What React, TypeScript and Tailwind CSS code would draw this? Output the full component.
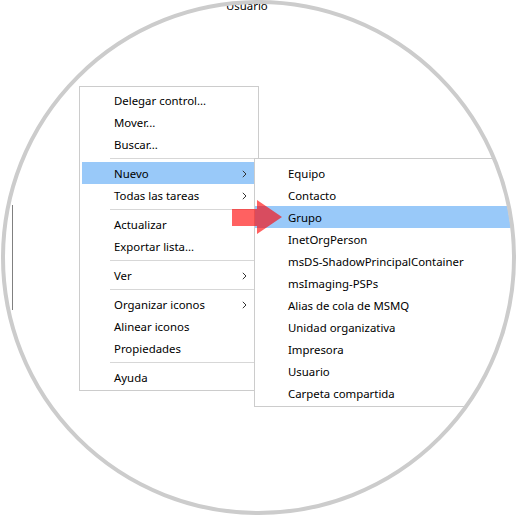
import React from "react";

type Item = { label: string; sub?: boolean; active?: boolean } | "sep";

const mainItems: Item[] = [
  { label: "Delegar control..." },
  { label: "Mover..." },
  { label: "Buscar..." },
  "sep",
  { label: "Nuevo", sub: true, active: true },
  { label: "Todas las tareas", sub: true },
  "sep",
  { label: "Actualizar" },
  { label: "Exportar lista..." },
  "sep",
  { label: "Ver", sub: true },
  "sep",
  { label: "Organizar iconos", sub: true },
  { label: "Alinear iconos" },
  { label: "Propiedades" },
  "sep",
  { label: "Ayuda" },
];

const subItems = [
  "Equipo",
  "Contacto",
  "Grupo",
  "InetOrgPerson",
  "msDS-ShadowPrincipalContainer",
  "msImaging-PSPs",
  "Alias de cola de MSMQ",
  "Unidad organizativa",
  "Impresora",
  "Usuario",
  "Carpeta compartida",
];

function Chevron() {
  return (
    <svg width="5" height="8" viewBox="0 0 5 8" className="shrink-0">
      <path d="M0.8 0.8 L4 4 L0.8 7.2" fill="none" stroke="#333" strokeWidth="1" />
    </svg>
  );
}

export default function App() {
  return (
    <div className="relative w-[520px] h-[520px] bg-white overflow-hidden font-['Noto_Sans',sans-serif] text-[11.4px] text-black">
      <div className="absolute inset-0 [clip-path:circle(254px_at_258.5px_257.5px)]">
        {/* background content */}
        <div className="absolute left-[226px] top-[-2px] leading-[16px]">Usuario</div>
        <div className="absolute left-[12px] top-[205px] w-px h-[105px] bg-[#808080]" />

        {/* main menu */}
        <div className="absolute left-[79px] top-[86px] w-[180px] bg-white border border-[#cccccc] pt-[2px] pb-[2px] flex flex-col">
          {mainItems.map((it, i) =>
            it === "sep" ? (
              <div key={i} className="h-[7px] flex items-center pl-[30px] pr-[2px]">
                <div className="h-px w-full bg-[#d7d7d7]" />
              </div>
            ) : (
              <div
                key={i}
                className={
                  "h-[22px] mx-[2px] flex items-center pl-[32px] pr-[9px] pt-px " +
                  (it.active ? "bg-[#99c9f9]" : "")
                }
              >
                <span className="flex-1 whitespace-nowrap">{it.label}</span>
                {it.sub && <Chevron />}
              </div>
            )
          )}
        </div>

        {/* submenu */}
        <div className="absolute left-[254px] top-[158px] w-[300px] bg-white border border-[#cccccc] pt-[3px] pb-[2px] flex flex-col">
          {subItems.map((s) => (
            <div
              key={s}
              className={
                "h-[22px] flex items-center pl-[33px] pt-px whitespace-nowrap " +
                (s === "Grupo" ? "bg-[#99c9f9]" : "")
              }
            >
              {s}
            </div>
          ))}
        </div>

        {/* red arrow */}
        <svg className="absolute left-0 top-0" width="520" height="520" viewBox="0 0 520 520">
          <path
            d="M232 209 L257 209 L257 200 L282 217 L257 234 L257 226 L232 226 Z"
            fill="rgba(255,0,0,0.62)"
          />
        </svg>
      </div>

      {/* ring */}
      <div className="absolute left-[1px] top-0 w-[515px] h-[515px] rounded-full border-[4px] border-[#cccccc] pointer-events-none" />
    </div>
  );
}
